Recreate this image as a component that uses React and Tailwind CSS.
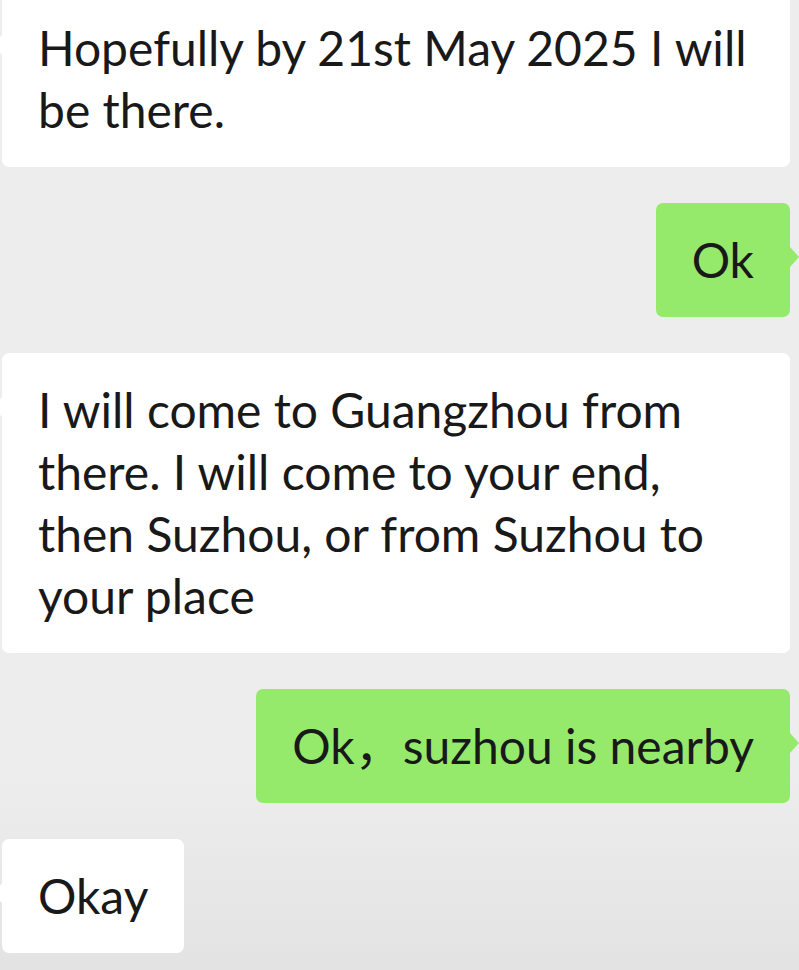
import React from 'react';

const messages = [
  { from: 'them', text: 'Hopefully by 21st May 2025 I will be there.' },
  { from: 'me', text: 'Ok' },
  { from: 'them', text: 'I will come to Guangzhou from there. I will come to your end, then Suzhou, or from Suzhou to your place' },
  { from: 'me', text: 'Ok，suzhou is nearby' },
  { from: 'them', text: 'Okay' },
];

const Bubble = ({ from, text }) => {
  const mine = from === 'me';
  return (
    <div className={mine ? 'flex justify-end' : 'flex justify-start'}>
      <div
        className={
          'relative rounded-[7px] px-[36px] py-[26px] text-[48px] leading-[62px] text-[#191919] ' +
          (mine ? 'bg-[#95ea6c]' : 'bg-white')
        }
      >
        {mine ? (
          <span className="absolute right-[-9px] top-[44px] h-0 w-0 border-y-[10px] border-l-[9px] border-y-transparent border-l-[#95ea6c]" />
        ) : (
          <span className="absolute left-[-9px] top-[44px] h-0 w-0 border-y-[10px] border-r-[9px] border-y-transparent border-r-white" />
        )}
        {text}
      </div>
    </div>
  );
};

export default function App() {
  return (
    <div
      className="h-[970px] w-[799px] overflow-hidden bg-gradient-to-b from-[#ededed] from-80% to-[#e3e3e3] pl-[2px] pr-[9px]"
      style={{ fontFamily: 'Lato, "Noto Sans CJK SC", sans-serif' }}
    >
      <div className="-mt-[9px] flex flex-col gap-[36px]">
        {messages.map((m, i) => (
          <Bubble key={i} from={m.from} text={m.text} />
        ))}
      </div>
    </div>
  );
}
